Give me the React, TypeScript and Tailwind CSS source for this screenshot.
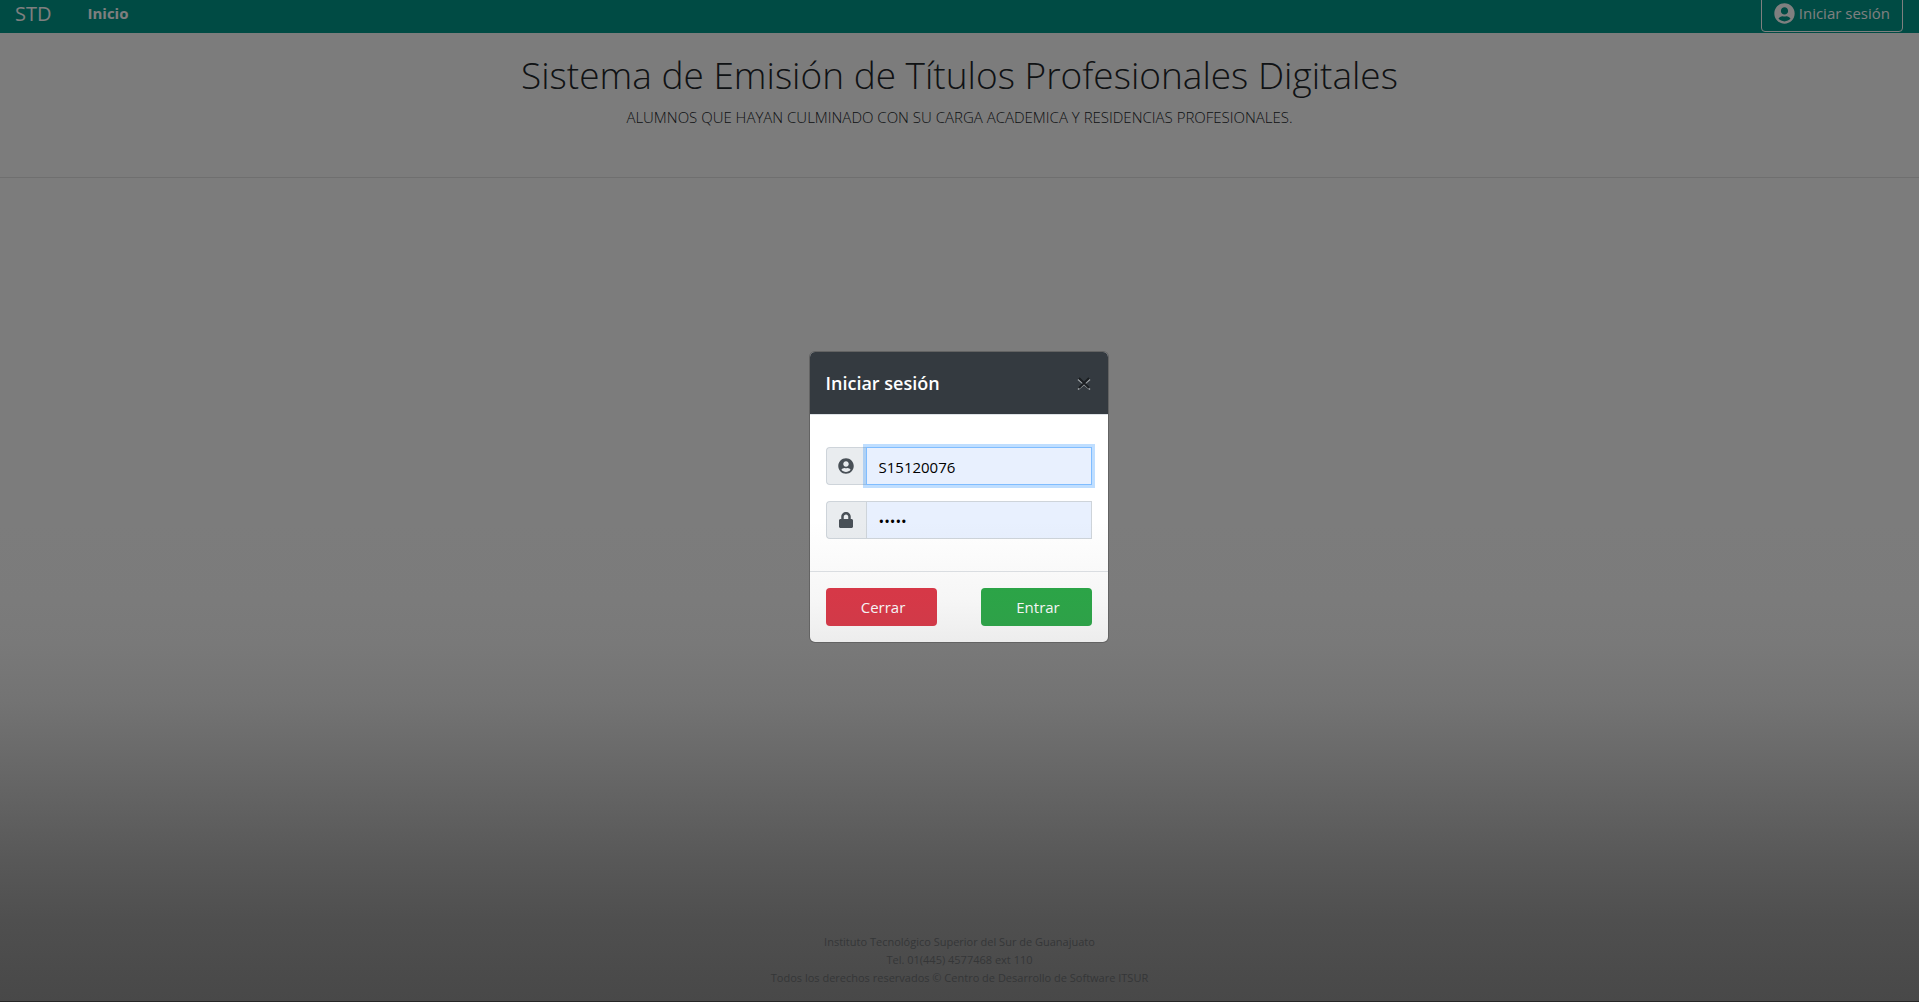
import { FaLock, FaUserCircle } from "react-icons/fa";

const inputClass =
  "h-[38px] min-w-0 flex-1 border bg-[#e8f0fe] px-3 pt-0.5 text-[15px] text-black outline-none";
const addonClass =
  "flex w-10 shrink-0 items-center justify-center rounded-l border border-r-0 border-[#ced4da] bg-[#e9ecef] text-[#495057]";

function LoginDialog() {
  return (
    <div className="absolute inset-0 flex justify-center bg-black/50 pt-[351px] pr-0.5">
      <form
        role="dialog"
        aria-labelledby="login-title"
        onSubmit={(e) => e.preventDefault()}
        className="w-[300px] self-start overflow-hidden rounded-md border border-black/20 bg-white bg-clip-padding"
      >
        <div className="flex items-center justify-between border-b border-[#dee2e6] bg-[#343a40] px-4 py-4">
          <h2 id="login-title" className="text-lg leading-[30px] font-semibold text-white">
            Iniciar sesión
          </h2>
          <button type="button" aria-label="Close" className="flex w-4 justify-center">
            <svg viewBox="0 0 14 14" className="size-3.5" fill="none">
              <path d="M1 3.5 13 13.5M13 3.5 1 13.5" stroke="#999da0" strokeWidth="1.6" />
              <path d="M2 2 12 12M12 2 2 12" stroke="#1a1d20" strokeWidth="1.8" />
            </svg>
          </button>
        </div>

        <div className="flex flex-col gap-4 px-4 py-8">
          <div className="flex">
            <label htmlFor="user" className={addonClass}>
              <FaUserCircle className="size-4" aria-label="Usuario" />
            </label>
            <input
              id="user"
              type="text"
              defaultValue="S15120076"
              className={inputClass + " border-[#80bdff] ring-3 ring-[#007bff]/25"}
            />
          </div>
          <div className="flex">
            <label htmlFor="password" className={addonClass}>
              <FaLock className="size-4" aria-label="Contraseña" />
            </label>
            <input
              id="password"
              type="password"
              defaultValue="abcde"
              className={inputClass + " border-[#ced4da]"}
            />
          </div>
        </div>

        <div className="flex justify-between border-t border-[#dee2e6] p-4">
          <button type="button" className="h-[38px] w-[111px] rounded bg-[#dc3545] pl-1 text-white">
            Cerrar
          </button>
          <button type="submit" className="h-[38px] w-[111px] rounded bg-[#28a745] pl-1 text-white">
            Entrar
          </button>
        </div>
      </form>
    </div>
  );
}

export default function App() {
  return (
    <div className="relative flex min-h-screen flex-col overflow-hidden bg-[#f8f8f8] font-['Open_Sans','Noto_Sans',sans-serif] text-[15px] text-[#212529]">
      <nav className="flex h-[33px] items-end justify-between bg-[#009688] pr-4 pl-[15px] text-white">
        <div className="flex h-full items-center gap-9 pb-1.5">
          <a href="#" className="text-xl leading-none">
            STD
          </a>
          <a href="#" className="text-[15px] leading-none font-bold">
            Inicio
          </a>
        </div>
        <button
          type="button"
          className="mb-px flex h-[38px] items-center gap-1 self-end rounded border border-white px-3"
        >
          <FaUserCircle className="size-[21px]" />
          Iniciar sesión
        </button>
      </nav>

      <header className="flex h-[145px] flex-col items-center border-b border-[#dfdfdf] pt-4 text-center font-light">
        <h1 className="text-[37px] leading-[52px]">
          Sistema de Emisión de Títulos Profesionales Digitales
        </h1>
        <p className="mt-1 text-[15px] leading-6">
          ALUMNOS QUE HAYAN CULMINADO CON SU CARGA ACADEMICA Y RESIDENCIAS PROFESIONALES.
        </p>
      </header>

      <main className="flex-1" />

      <footer className="border-b border-black pb-3.5 text-center text-[11px] leading-[18px] text-[#6c757d]">
        <p>Instituto Tecnológico Superior del Sur de Guanajuato</p>
        <p>Tel. 01(445) 4577468 ext 110</p>
        <p>Todos los derechos reservados © Centro de Desarrollo de Software ITSUR</p>
      </footer>

      <LoginDialog />
      <div className="pointer-events-none absolute inset-0 bg-[linear-gradient(to_bottom,#70707000_52%,#6c6c6c10_60%,#6464641e_64%,#4848482c_70%,#34343444_76%,#34343480_86%,#343434a0_92%,#343434b8_100%)]" />
    </div>
  );
}
